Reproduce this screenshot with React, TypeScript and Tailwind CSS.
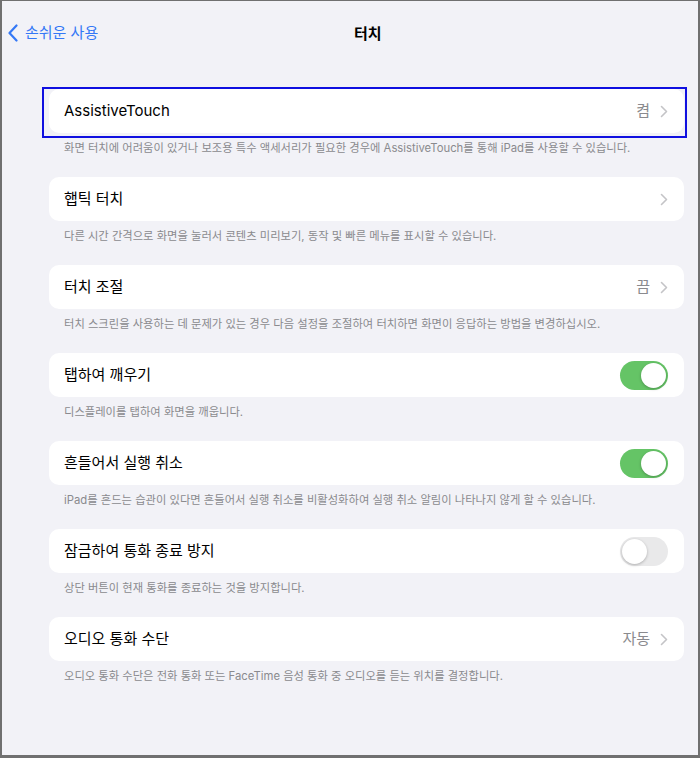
import React from 'react';

type Row = {
    title: string;
    footer: string;
    value?: string;
    chevron?: boolean;
    toggle?: boolean;
    selected?: boolean;
};

const rows: Row[] = [
    { title: 'AssistiveTouch', value: '켬', chevron: true, selected: true, footer: '화면 터치에 어려움이 있거나 보조용 특수 액세서리가 필요한 경우에 AssistiveTouch를 통해 iPad를 사용할 수 있습니다.' },
    { title: '햅틱 터치', chevron: true, footer: '다른 시간 간격으로 화면을 눌러서 콘텐츠 미리보기, 동작 및 빠른 메뉴를 표시할 수 있습니다.' },
    { title: '터치 조절', value: '끔', chevron: true, footer: '터치 스크린을 사용하는 데 문제가 있는 경우 다음 설정을 조절하여 터치하면 화면이 응답하는 방법을 변경하십시오.' },
    { title: '탭하여 깨우기', toggle: true, footer: '디스플레이를 탭하여 화면을 깨웁니다.' },
    { title: '흔들어서 실행 취소', toggle: true, footer: 'iPad를 흔드는 습관이 있다면 흔들어서 실행 취소를 비활성화하여 실행 취소 알림이 나타나지 않게 할 수 있습니다.' },
    { title: '잠금하여 통화 종료 방지', toggle: false, footer: '상단 버튼이 현재 통화를 종료하는 것을 방지합니다.' },
    { title: '오디오 통화 수단', value: '자동', chevron: true, footer: '오디오 통화 수단은 전화 통화 또는 FaceTime 음성 통화 중 오디오를 듣는 위치를 결정합니다.' },
];

const Chevron = () => (
    <svg width="8" height="13" viewBox="0 0 8 13" className="ml-[10px]">
        <path d="M1.5 1.5 L6.5 6.5 L1.5 11.5" fill="none" stroke="#c4c4c7" strokeWidth="1.6" strokeLinecap="round" strokeLinejoin="round" />
    </svg>
);

const Toggle = ({ on }: { on: boolean }) => (
    <div className={`w-[48px] h-[29px] rounded-full p-[2px] flex ${on ? 'bg-[#65c466] justify-end' : 'bg-[#e9e9ea] justify-start'}`}>
        <div className="w-[25px] h-[25px] rounded-full bg-white shadow-[0_1px_3px_rgba(0,0,0,0.25)]" />
    </div>
);

const SettingRow = ({ row }: { row: Row }) => (
    <div className="mb-[21px]">
        <div className="relative h-[44px] bg-white rounded-[10px] flex items-center pl-[15px] pr-[16px]">
            <span className="flex-1 text-[15px] text-black">{row.title}</span>
            {row.value && <span className="text-[15px] text-[#8a8a8e]">{row.value}</span>}
            {row.chevron && <Chevron />}
            {row.toggle !== undefined && <Toggle on={row.toggle} />}
            {row.selected && (
                <div className="absolute -top-[2px] -bottom-[5px] -left-[7px] -right-[3px] border-2 border-[#1010e0]" />
            )}
        </div>
        <p className="pl-[15px] pt-[7px] text-[11.3px] leading-[16px] text-[#8a8a8e] whitespace-nowrap">{row.footer}</p>
    </div>
);

export default function App() {
    return (
        <div
            className="w-[700px] h-[758px] bg-[#f2f2f7] border-x-2 border-t-[1px] border-b-[3px] border-[#707070] overflow-hidden"
            style={{ fontFamily: 'Inter, "Noto Sans CJK KR", sans-serif' }}
        >
            <div className="relative h-[66px] flex items-center pl-[5px]">
                <div className="flex items-center text-[#3478f6] text-[15px] -mt-[2px]">
                    <svg width="12" height="18" viewBox="0 0 12 18" className="mr-[6px]">
                        <path d="M9.5 1.5 L2.5 9 L9.5 16.5" fill="none" stroke="#3478f6" strokeWidth="2.2" strokeLinecap="round" strokeLinejoin="round" />
                    </svg>
                    <span>손쉬운 사용</span>
                </div>
                <span className="absolute left-[352px] top-[22px] text-[15px] font-semibold text-black">터치</span>
            </div>
            <div className="pl-[47px] pr-[14px] pt-[22px]">
                {rows.map((row) => (
                    <SettingRow key={row.title} row={row} />
                ))}
            </div>
        </div>
    );
}
